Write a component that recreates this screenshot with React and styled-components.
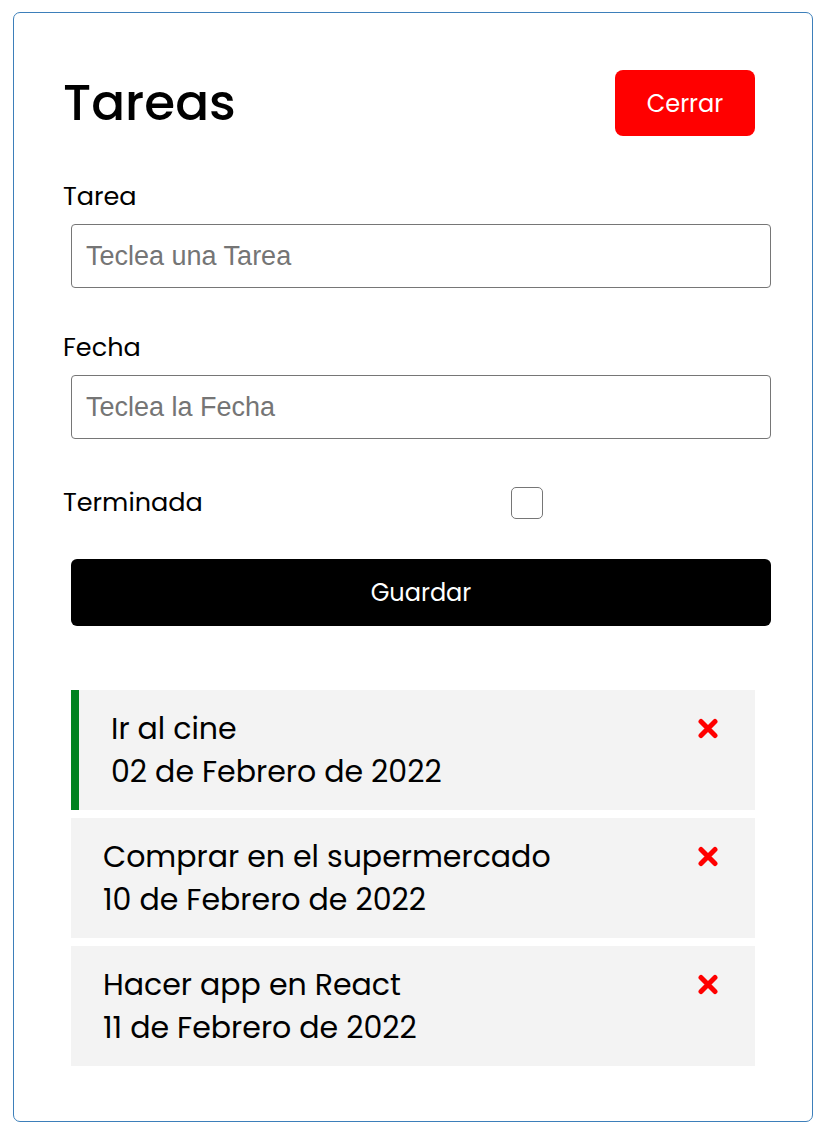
import React from 'react';
import styled, { createGlobalStyle } from 'styled-components';

const Global = createGlobalStyle`
  html, body { margin: 0; padding: 0; background: #fff; }
  body { font-family: Poppins, Inter, "Noto Sans", sans-serif; color: #000; }
  * { box-sizing: border-box; }
`;

const Page = styled.div`
  padding: 12px 0 16px 13px;
`;

const Card = styled.div`
  width: 800px;
  border: 1px solid #3d7fba;
  border-radius: 7px;
  padding: 50px 49px 55px 49px;
`;

const Header = styled.div`
  height: 80px;
  display: flex;
  align-items: center;
  justify-content: space-between;
  padding-right: 8px;
`;

const Title = styled.h1`
  margin: 0;
  font-size: 50px;
  font-weight: 500;
  line-height: 1;
`;

const CloseButton = styled.button`
  width: 140px;
  height: 66px;
  border: none;
  border-radius: 8px;
  background: #ff0000;
  color: #fff;
  font-family: inherit;
  font-size: 24px;
`;

const Form = styled.form`
  display: flex;
  flex-direction: column;
  margin-top: 35px;
`;

const Label = styled.label`
  font-size: 25.5px;
  line-height: 36px;
  margin-top: ${p => p.$gap || 0}px;
`;

const TextInput = styled.input`
  margin: 10px 0 0 8px;
  width: 700px;
  height: 64px;
  border: 1px solid #767676;
  border-radius: 4px;
  padding: 0 14px;
  font-family: "Liberation Sans", Arial, sans-serif;
  font-size: 27px;
  &::placeholder { color: #757575; }
`;

const CheckRow = styled.div`
  display: flex;
  align-items: center;
  height: 36px;
  margin-top: 45px;
`;

const CheckLabel = styled.label`
  flex: 0 0 448px;
  font-size: 25.5px;
  line-height: 36px;
`;

const Check = styled.input`
  appearance: none;
  margin: 1px 0 0;
  width: 32px;
  height: 32px;
  border: 1.5px solid #767676;
  border-radius: 5px;
  background: #fff;
`;

const SaveButton = styled.button`
  margin: 39px 0 0 8px;
  width: 700px;
  height: 67px;
  border: none;
  border-radius: 6px;
  background: #000;
  color: #fff;
  font-family: inherit;
  font-size: 24px;
`;

const List = styled.ul`
  list-style: none;
  margin: 64px 8px 0;
  padding: 0;
  display: flex;
  flex-direction: column;
  gap: 8px;
`;

const Item = styled.li`
  height: 120px;
  background: #f3f3f3;
  border-left: ${p => (p.$done ? '8px solid #00821f' : 'none')};
  padding: 17px 36px 0 32px;
  display: flex;
  justify-content: space-between;
  align-items: flex-start;
`;

const ItemText = styled.div`
  font-size: 30px;
  line-height: 43px;
`;

const DeleteIcon = styled.svg`
  margin-top: 11px;
  width: 22px;
  height: 21px;
  flex: none;
`;

const tasks = [
  { text: 'Ir al cine', date: '02 de Febrero de 2022', done: true },
  { text: 'Comprar en el supermercado', date: '10 de Febrero de 2022', done: false },
  { text: 'Hacer app en React', date: '11 de Febrero de 2022', done: false },
];

const XIcon = () => (
  <DeleteIcon viewBox="0 0 22 21">
    <path d="M4 3.5 L18 17.5 M18 3.5 L4 17.5" stroke="#ff0000" strokeWidth="5" strokeLinecap="round" fill="none" />
  </DeleteIcon>
);

export default function App() {
  return (
    <>
      <Global />
      <Page>
        <Card>
          <Header>
            <Title>Tareas</Title>
            <CloseButton type="button">Cerrar</CloseButton>
          </Header>
          <Form onSubmit={e => e.preventDefault()}>
            <Label htmlFor="tarea">Tarea</Label>
            <TextInput id="tarea" placeholder="Teclea una Tarea" />
            <Label htmlFor="fecha" $gap={41}>Fecha</Label>
            <TextInput id="fecha" placeholder="Teclea la Fecha" />
            <CheckRow>
              <CheckLabel htmlFor="terminada">Terminada</CheckLabel>
              <Check id="terminada" type="checkbox" />
            </CheckRow>
            <SaveButton type="submit">Guardar</SaveButton>
          </Form>
          <List>
            {tasks.map(t => (
              <Item key={t.text} $done={t.done}>
                <ItemText>
                  <div>{t.text}</div>
                  <div>{t.date}</div>
                </ItemText>
                <XIcon />
              </Item>
            ))}
          </List>
        </Card>
      </Page>
    </>
  );
}
